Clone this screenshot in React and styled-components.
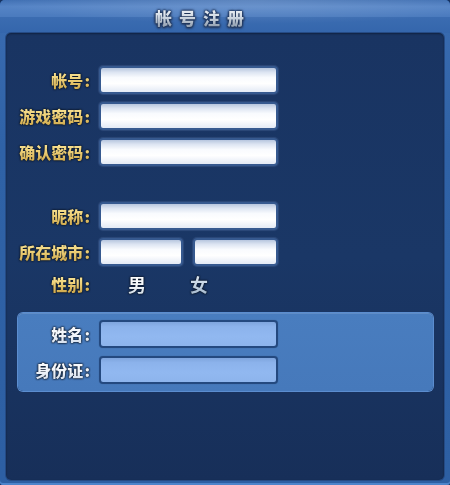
import React from "react";
import styled, { createGlobalStyle } from "styled-components";

const Global = createGlobalStyle`
  html, body { margin: 0; padding: 0; background: #183361; }
  body { font-family: "Noto Sans CJK SC", "Noto Sans", sans-serif; }
  * { box-sizing: border-box; }
`;

const Frame = styled.div`
  width: 450px;
  height: 485px;
  display: flex;
  flex-direction: column;
  border-radius: 5px 5px 3px 3px;
  background: linear-gradient(180deg, #3a6cb1 0%, #2f62a6 30%, #2d5fa3 100%);
  box-shadow: inset 0 -2px 0 #4d84cb, inset 0 1px 0 #2b5c9f;
  overflow: hidden;
`;

const Header = styled.div`
  height: 33px;
  flex: none;
  display: flex;
  align-items: center;
  padding-left: 155px;
  background:
    radial-gradient(ellipse 260px 24px at 56% 0%, rgba(255, 255, 255, 0.16), rgba(255, 255, 255, 0) 100%),
    linear-gradient(180deg, #3f6fb3 0%, #5584c6 20%, #4b7bbe 50%, #3b6cb1 53%, #3466ac 100%);
`;

const Title = styled.h1`
  margin: 0;
  font-size: 17px;
  font-weight: 900;
  letter-spacing: 7px;
  line-height: 20px;
  margin-top: 2px;
  background: linear-gradient(180deg, #f4f7fa 0%, #cfd8e2 45%, #8a98aa 100%);
  -webkit-background-clip: text;
  background-clip: text;
  color: transparent;
  filter: drop-shadow(0 0 0.8px #1e3358) drop-shadow(0 0 0.8px #1e3358) drop-shadow(0 1px 0.5px #2a4470);
`;

const Panel = styled.div`
  flex: 1;
  margin: 0 6px 5px;
  border-radius: 5px;
  background: linear-gradient(180deg, #193462 0%, #1a3766 50%, #172f59 100%);
  box-shadow: 0 0 0 1px #254b85, inset 0 1px 2px rgba(0, 0, 0, 0.35);
  padding-top: 33px;
  display: flex;
  flex-direction: column;
`;

const Rows = styled.div`
  display: grid;
  grid-template-columns: ${(p) => p.$label}px 179px;
  column-gap: 9px;
  row-gap: 8px;
  align-items: center;
  margin-top: ${(p) => p.$top || 0}px;
`;

const Label = styled.label`
  justify-self: end;
  font-size: 16px;
  font-weight: 900;
  line-height: 28px;
  white-space: nowrap;
  color: transparent;
  background: ${(p) =>
    p.$light
      ? "linear-gradient(180deg, #ffffff 0%, #f0f4fa 55%, #c6d3e6 100%)"
      : "linear-gradient(180deg, #fff2b0 0%, #efd27a 45%, #c39a3c 100%)"};
  -webkit-background-clip: text;
  background-clip: text;
  filter: drop-shadow(0 0 0.8px #0a1526) drop-shadow(0 0 0.6px #0a1526);
`;

const Colon = styled.span`
  margin-left: 1px;
`;

const Input = styled.input`
  width: ${(p) => p.$w || 179}px;
  height: 28px;
  border-radius: 4px;
  outline: none;
  padding: 0 6px;
  font: 13px "Noto Sans CJK SC", sans-serif;
  border: 2px solid ${(p) => (p.$blue ? "#24497f" : "#36598f")};
  background: ${(p) =>
    p.$blue
      ? "linear-gradient(180deg, #7fa5dd 0%, #8cb3ec 20%, #91b8f0 60%, #8db4ec 100%)"
      : "linear-gradient(180deg, #b7c6de 0%, #dde5f2 18%, #f9fbfe 40%, #ffffff 65%, #e3eaf5 100%)"};
  box-shadow: ${(p) =>
    p.$blue ? "0 0 1px rgba(0,0,0,0.3)" : "0 0 1px 1px rgba(80,110,160,0.35)"};
`;

const Pair = styled.div`
  display: flex;
  gap: 10px;
`;

const Genders = styled.div`
  display: flex;
  align-items: center;
  height: 24px;
  padding-left: 29px;
  gap: 44px;
`;

const Gender = styled.span`
  font-size: 18px;
  font-weight: 700;
  line-height: 24px;
  color: transparent;
  background: ${(p) =>
    p.$dim
      ? "linear-gradient(180deg, #e6eef6 0%, #c2d2e2 60%, #9fb4ca 100%)"
      : "linear-gradient(180deg, #ffffff 0%, #f2f6fa 60%, #c7d4e2 100%)"};
  -webkit-background-clip: text;
  background-clip: text;
  filter: drop-shadow(0 0 0.8px #0a1526) drop-shadow(0 0 0.6px #0a1526);
`;

const GenderLabel = styled(Label)`
  line-height: 24px;
`;

const Spacer = styled.div`
  height: ${(p) => p.$h}px;
  flex: none;
`;

const Box = styled.div`
  margin: 17px 11px 0 12px;
  padding: 7px 0;
  border-radius: 5px;
  background: linear-gradient(180deg, #497dbf 0%, #4679bb 100%);
  box-shadow: 0 0 0 1px #5b8dcf, inset 0 1px 0 rgba(255, 255, 255, 0.12);
`;

export default function App() {
  return (
    <>
      <Global />
      <Frame>
        <Header>
          <Title>帐号注册</Title>
        </Header>
        <Panel>
          <Rows $label={84}>
            <Label>帐号<Colon>:</Colon></Label>
            <Input />
            <Label>游戏密码<Colon>:</Colon></Label>
            <Input type="password" />
            <Label>确认密码<Colon>:</Colon></Label>
            <Input type="password" />
          </Rows>
          <Spacer $h={36} />
          <Rows $label={84}>
            <Label>昵称<Colon>:</Colon></Label>
            <Input />
            <Label>所在城市<Colon>:</Colon></Label>
            <Pair>
              <Input $w={84} />
              <Input $w={85} />
            </Pair>
          </Rows>
          <Rows $label={84} $top={6}>
            <GenderLabel>性别<Colon>:</Colon></GenderLabel>
            <Genders>
              <Gender>男</Gender>
              <Gender $dim>女</Gender>
            </Genders>
          </Rows>
          <Box>
            <Rows $label={72}>
              <Label $light>姓名<Colon>:</Colon></Label>
              <Input $blue />
              <Label $light>身份证<Colon>:</Colon></Label>
              <Input $blue />
            </Rows>
          </Box>
        </Panel>
      </Frame>
    </>
  );
}
